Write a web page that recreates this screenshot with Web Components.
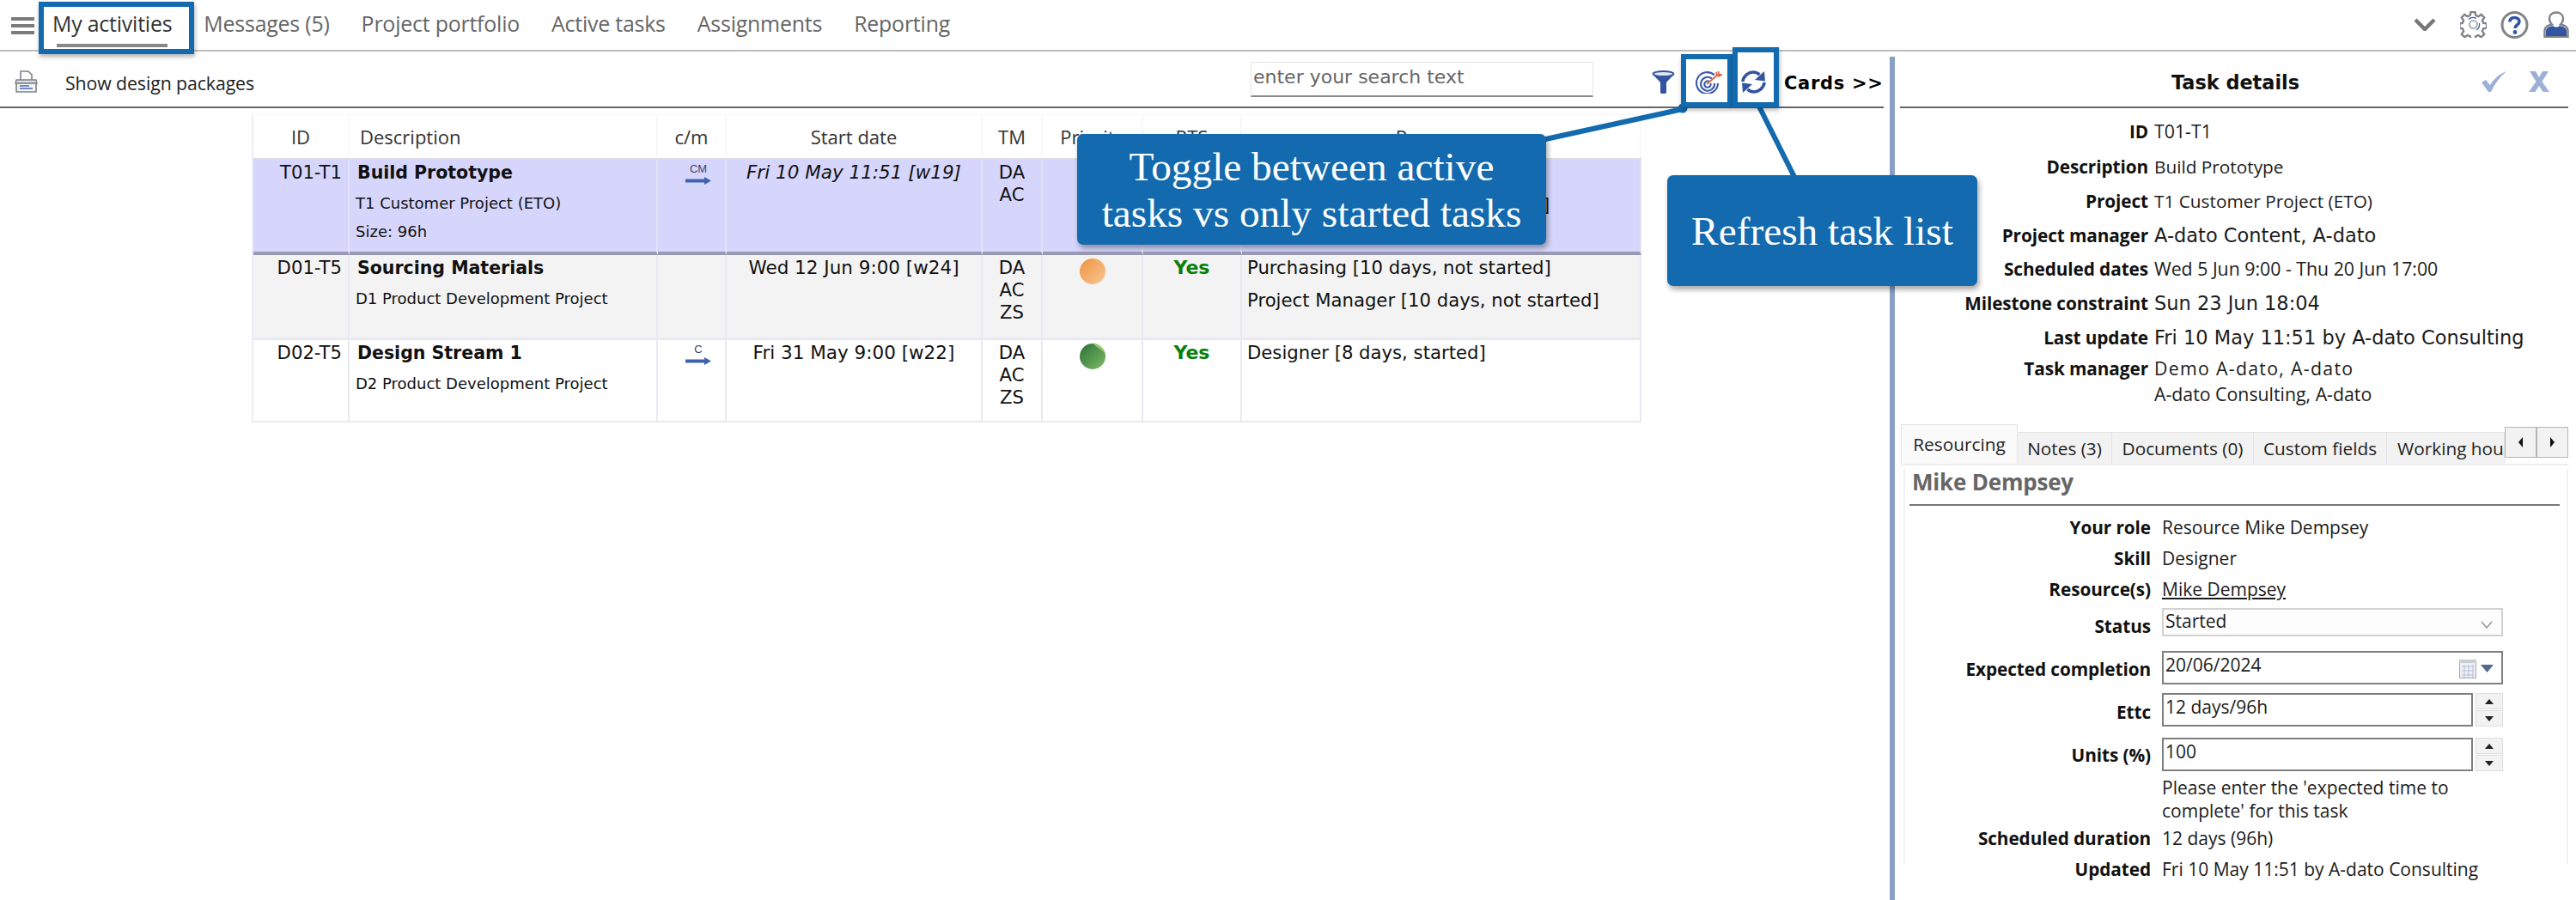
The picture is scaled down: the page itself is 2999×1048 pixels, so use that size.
<!DOCTYPE html>
<html>
<head>
<meta charset="utf-8">
<title>My activities</title>
<style>
html, body { margin: 0; padding: 0; background: #fff; }
body { width: 2999px; height: 1048px; overflow: hidden; position: relative; font-family: "Open Sans", "Liberation Sans", sans-serif; color: #111; }
</style>
</head>
<body>
<app-nav></app-nav>
<main-area></main-area>
<call-outs></call-outs>

<script>
const SANS = '"Open Sans", "Liberation Sans", sans-serif'
const VERD = '"DejaVu Sans", "Liberation Sans", sans-serif'

class AppNav extends HTMLElement {
	constructor() {
		super()
		this.attachShadow({ mode: 'open' })
	}
	connectedCallback() {
		this.shadowRoot.innerHTML = `
		<style>
			:host { display: flex; align-items: flex-start; height: 58px; border-bottom: 2px solid #bdbdbd; box-sizing: content-box; font-family: ${SANS}; }
			.burger { width: 27px; margin: 20px 21px 0 13px; display: flex; flex-direction: column; gap: 4px; }
			.burger i { display: block; height: 4px; background: #7b7b7b; }
			a { font-size: 24.900px; line-height: 30px; margin: 12px 37px 0 0; color: #666; letter-spacing: -.2px; white-space: nowrap; }
			a.on { color: #333; position: relative; margin-right: 37px; }
			a.on::after { content: ''; position: absolute; left: 5px; right: 5px; top: 39px; height: 4px; background: #888; }
			.right { margin-left: auto; display: flex; align-items: flex-start; padding: 13px 8px 0 0; }
			svg { display: block; }
		</style>
		<div class="burger"><i></i><i></i><i></i></div>
		<a class="on">My activities</a>
		<a>Messages (5)</a>
		<a>Project portfolio</a>
		<a>Active tasks</a>
		<a>Assignments</a>
		<a>Reporting</a>
		<div class="right">
			<svg width="26" height="15" viewBox="0 0 26 15" style="margin:8px 28px 0 0"><path d="M2 2 13 13 24 2" fill="none" stroke="#777" stroke-width="4.5"/></svg>
			<svg width="31" height="31" viewBox="0 0 31 31" style="margin-right:16px">
				<path d="M13 1.5h5l.8 4 3 1.2 3.4-2.3 3.5 3.5-2.3 3.4 1.2 3 4 .8v5l-4 .8-1.2 3 2.3 3.4-3.5 3.5-3.4-2.3-3 1.2-.8 3.4h-5l-.8-3.4-3-1.2-3.4 2.3-3.5-3.5 2.3-3.4-1.2-3-3.5-.8v-5l3.5-.8 1.2-3-2.3-3.4 3.5-3.5 3.4 2.3 3-1.2z" transform="translate(-.5 -.5)" fill="#fff" stroke="#808488" stroke-width="2.4"/>
				<circle cx="15.5" cy="15.5" r="4.5" fill="none" stroke="#9a9ea2" stroke-width="1.6"/>
				<path d="M10 9.5A8 8 0 0 1 19 8.5M22.5 14A8 8 0 0 1 19 22" fill="none" stroke="#3a5ba6" stroke-width="1.2"/>
			</svg>
			<svg width="33" height="32" viewBox="0 0 33 32" style="margin-right:17px">
				<ellipse cx="16.5" cy="16" rx="14.5" ry="14.5" fill="#fff" stroke="#808488" stroke-width="3"/>
				<path d="M11 12.5C11 9 13.5 7.5 16.5 7.5S22 9.2 22 12c0 4-5 4-5 8" fill="none" stroke="#2f55a4" stroke-width="3.6"/>
				<circle cx="17" cy="24.5" r="2.4" fill="#2f55a4"/>
			</svg>
			<svg width="30" height="31" viewBox="0 0 30 31">
				<path d="M1.5 30V22C2 17.500 6 16.500 10 15.500 7.500 13 7 10 7 8.500 7 4 10.500 1.500 15 1.500S23 4 23 8.500C23 10 22.500 13 20 15.500 24 16.500 28 17.500 28.500 22V30Z" fill="#fff" stroke="#808488" stroke-width="2.4"/>
				<path d="M3 29V22.500C3.500 19 7.500 18 11 17 13 19 17 19 19 17 22.500 18 26.500 19 27 22.500V29Z" fill="#33549f"/>
			</svg>
		</div>`
	}
}

class ToolBar extends HTMLElement {
	constructor() {
		super()
		this.attachShadow({ mode: 'open' })
	}
	connectedCallback() {
		this.shadowRoot.innerHTML = `
		<style>
			:host { display: flex; align-items: flex-start; border-bottom: 2px solid #666; margin-right: 7px; box-sizing: border-box; height: 66px; font-family: ${SANS}; }
			svg { display: block; }
			.lead { width: 1456px; flex: none; display: flex; align-items: flex-start; }
			.show { font-size: 21.300px; line-height: 28px; margin: 23px 0 0 32px; color: #222; letter-spacing: -.1px; white-space: nowrap; }
			.search { width: 399px; height: 41px; flex: none; box-sizing: border-box; margin-top: 12px; border: 1px solid #e6e6e6; border-bottom: 2px solid #8a8a8a; padding: 4px 0 0 2px; font: 22px/26px ${VERD}; color: #666; white-space: nowrap; }
			.cards { font: bold 21px/28px ${VERD}; letter-spacing: .7px; color: #000; margin: 23px 0 0 21px; white-space: nowrap; }
		</style>
		<div class="lead">
			<svg width="27" height="26" viewBox="0 0 27 26" style="margin:22px 0 0 17px">
				<path d="M7 1h9l4 4v8H7z" fill="#fff" stroke="#7d8288" stroke-width="1.6"/>
				<path d="M2 11h23l1 4H1z" fill="#d9dce0" stroke="#7d8288" stroke-width="1.4"/>
				<path d="M2 15h23v10H2z" fill="#f3f4f6" stroke="#7d8288" stroke-width="1.6"/>
				<path d="M6 18h11M6 21h15" stroke="#4a66b0" stroke-width="1.6"/>
			</svg>
			<div class="show">Show design packages</div>
		</div>
		<div class="search">enter your search text</div>
		<svg width="27" height="27" viewBox="0 0 27 27" style="margin:22px 0 0 68px">
			<ellipse cx="13.500" cy="4" rx="12" ry="3" fill="#dfe6f3" stroke="#33549f" stroke-width="1.800"/>
			<path d="M1.500 5 10 14V25.500Q10 27 13.500 27T17 25.500V14L25.500 5Q13.500 10 1.500 5Z" fill="#33549f"/>
		</svg>
		<svg width="32" height="27" viewBox="0 0 32 27" style="margin:22px 0 0 23px">
			<g fill="none" stroke="#3a5aa8" stroke-width="2.100">
				<path d="M23 5.500A12.500 12.500 0 1 0 27 15"/>
				<path d="M20 9.500A8 8 0 1 0 23 15"/>
				<path d="M17 13A3.700 3.700 0 1 0 18.500 15"/>
			</g>
			<path d="M14 16 27 5" stroke="#d9694a" stroke-width="1.800"/>
			<path d="M25 2 26 6 30 7M27.500 1 28 5 32 5" fill="none" stroke="#d9694a" stroke-width="1.800"/>
		</svg>
		<svg width="29" height="27" viewBox="0 0 29 27" style="margin:22px 0 0 22px">
			<g fill="none" stroke="#33549f" stroke-width="3.600">
				<path d="M1.800 13C3 6 9 2 14 2c3 0 5.500 1 7.500 3"/>
				<path d="M27.200 14C26 21 20 25 15 25c-3 0-5.500-1-7.500-3"/>
			</g>
			<g fill="#33549f">
				<path d="M27 1 28 12.500 16 11Z"/>
				<path d="M2 26 1 14.500 13 16Z"/>
			</g>
		</svg>
		<div class="cards">Cards &gt;&gt;</div>`
	}
}

class TaskTable extends HTMLElement {
	constructor() {
		super()
		this.attachShadow({ mode: 'open' })
	}
	dot(c1, c2, c3) {
		return `<svg width="30" height="30" viewBox="0 0 30 30" style="display:block;margin:2px auto 0">
			<defs><linearGradient id="g${c1.slice(1)}" x1="0" y1="0" x2="1" y2="1"><stop offset="0" stop-color="${c1}"/><stop offset="1" stop-color="${c2}"/></linearGradient></defs>
			<circle cx="15" cy="15" r="15" fill="url(#g${c1.slice(1)})"/>
			<path d="M15 0A15 15 0 0 1 29.500 11L15 0Z" fill="${c3}"/>
		</svg>`
	}
	arrow(label) {
		return `<div class="cm"><span>${label}</span><svg width="30" height="9" viewBox="0 0 30 9"><path d="M0 2.500H22V0L30 4.500 22 9V6.500H0Z" fill="#3f62ae"/></svg></div>`
	}
	connectedCallback() {
		this.shadowRoot.innerHTML = `
		<style>
			:host { display: block; margin: 7px 0 0 293px; width: 1618px; font: 21.200px/26px ${VERD}; color: #111; }
			table { border-collapse: separate; border-spacing: 0; table-layout: fixed; width: 1618px; border-left: 2px solid #edeef5; }
			th { font: 400 22px/26px ${SANS}; color: #333; height: 50px; padding: 0; border-top: 1px solid #f6f6f9; border-right: 2px solid #f8f8fb; text-align: center; vertical-align: middle; }
			th.l { text-align: left; padding-left: 12px; }
			td { vertical-align: top; padding: 2px 8px 0; border-right: 2px solid #e9e9f3; border-bottom: 2px solid #e9e9f3; box-sizing: border-box; }
			tr.sel td { background: #d6d6fc; height: 113px; border-bottom: 4px solid #9999b5; border-top: 2px solid #dcdce8; border-right-color: #e2e2f4; }
			tr.odd td { background: #f3f3f3; height: 99px; border-bottom: 3px solid #e9e9f3; }
			tr.last td { height: 96px; }
			.id { text-align: right; padding-right: 7px; }
			.tt { font-weight: bold; font-size: 20.500px; margin-left: 1px; white-space: nowrap; }
			.sub { font-size: 18px; line-height: 24px; margin: 11px 0 0 -1px; white-space: nowrap; }
			.sub + .sub { margin-top: 9px; }
			.c { text-align: center; padding-left: 0; padding-right: 0; }
			.cm { display: flex; flex-direction: column; align-items: center; margin: 2px 0 0 24px; width: 30px; gap: 2px; }
			.cm span { font: 13px/14px "Liberation Sans", sans-serif; color: #3a4468; }
			.yes { color: #078007; font-weight: bold; font-size: 22px; }
			.res { padding-left: 6px; white-space: nowrap; }
			.res div + div { margin-top: 12px; }
			.sd { white-space: nowrap; font-size: 21.500px; }
		</style>
		<table>
			<colgroup><col style="width:112px"><col style="width:359px"><col style="width:80px"><col style="width:298px"><col style="width:70px"><col style="width:117px"><col style="width:115px"><col style="width:465px"></colgroup>
			<tr><th>ID</th><th class="l">Description</th><th>c/m</th><th>Start date</th><th>TM</th><th>Priority</th><th>RTS</th><th>Resources</th></tr>
			<tr class="sel">
				<td class="id">T01-T1</td>
				<td><div class="tt">Build Prototype</div><div class="sub">T1 Customer Project (ETO)</div><div class="sub">Size: 96h</div></td>
				<td>${this.arrow('CM')}</td>
				<td class="c sd"><i>Fri 10 May 11:51 [w19]</i></td>
				<td class="c">DA<br>AC</td>
				<td></td><td></td>
				<td class="res"><div style="height:26px"></div><div style="margin-left:344px">]</div></td>
			</tr>
			<tr class="odd">
				<td class="id">D01-T5</td>
				<td><div class="tt">Sourcing Materials</div><div class="sub">D1 Product Development Project</div></td>
				<td></td>
				<td class="c sd">Wed 12 Jun 9:00 [w24]</td>
				<td class="c">DA<br>AC<br>ZS</td>
				<td>${this.dot('#ee9440', '#f6c794', '#f7b06a')}</td>
				<td class="c yes">Yes</td>
				<td class="res"><div>Purchasing [10 days, not started]</div><div>Project Manager [10 days, not started]</div></td>
			</tr>
			<tr class="last">
				<td class="id">D02-T5</td>
				<td><div class="tt">Design Stream 1</div><div class="sub">D2 Product Development Project</div></td>
				<td>${this.arrow('C')}</td>
				<td class="c sd">Fri 31 May 9:00 [w22]</td>
				<td class="c">DA<br>AC<br>ZS</td>
				<td>${this.dot('#2a6f3a', '#7fbd62', '#9ccb6a')}</td>
				<td class="c yes">Yes</td>
				<td class="res"><div>Designer [8 days, started]</div></td>
			</tr>
		</table>`
	}
}

class DetailRow extends HTMLElement {
	constructor() {
		super()
		this.attachShadow({ mode: 'open' })
	}
	connectedCallback() {
		const w = this.getAttribute('label-width') || '289'
		const g = this.getAttribute('gap') || '7'
		const h = this.getAttribute('h') || '40'
		const top = this.getAttribute('label-top') || '0'
		const font = this.hasAttribute('wide') ? `22.500px ${VERD}` : `${this.getAttribute('size') || 21.3}px ${SANS}`
		this.shadowRoot.innerHTML = `
		<style>
			:host { display: grid; grid-template-columns: ${w}px 1fr; column-gap: ${g}px; height: ${h}px; align-items: start; line-height: 26px; }
			.k { text-align: right; font: bold 20.800px/26px ${SANS}; color: #111; white-space: nowrap; margin-top: ${top}px; letter-spacing: -.1px; }
			.v { font: ${font}; line-height: inherit; color: #1c1c1c; white-space: nowrap; }
		</style>
		<div class="k">${this.getAttribute('label')}</div>
		<div class="v"><slot></slot></div>`
	}
}

class FieldBox extends HTMLElement {
	constructor() {
		super()
		this.attachShadow({ mode: 'open' })
	}
	connectedCallback() {
		const kind = this.getAttribute('kind')
		let tail = ''
		if (kind == 'select') {
			tail = `<svg width="14" height="9" viewBox="0 0 14 9" style="margin:12px 10px 0 0"><path d="M1 1 7 8 13 1" fill="none" stroke="#888" stroke-width="1.200"/></svg>`
		}
		if (kind == 'date') {
			tail = `<svg width="40" height="22" viewBox="0 0 40 22" style="margin:6px 9px 0 0">
				<path d="M.5 .5H19.500V21.500H.5Z" fill="#eef0f5" stroke="#a6a8ac"/><path d="M0 0H20V4H0Z" fill="#c9ccd0"/>
				<path d="M3 8H17M3 13H17M3 18H17M6 6V21M11 6V21M16 6V21" stroke="#b3c0d8"/>
				<path d="M25 6H40L32.500 15Z" fill="#55688f"/>
			</svg>`
		}
		const spin = kind == 'spin'
		this.shadowRoot.innerHTML = `
		<style>
			:host { display: flex; gap: 3px; width: 397px; font: 21px/24px ${SANS}; color: #1c1c1c; }
			.box { flex: 1; display: flex; justify-content: space-between; box-sizing: border-box; border: ${kind == 'select' ? '2px solid #d2d2d2' : '2px solid #808080'}; height: ${kind == 'select' ? 33 : 39}px; padding: ${kind == 'select' ? 1 : 2}px 0 0 2px; background: ${kind == 'select' ? '#fdfdfd' : '#fff'}; }
			.spin { width: 32px; height: 39px; display: flex; flex-direction: column; gap: 1px; }
			.spin i { flex: 1; background: #f2f2f2; border: 1px solid #ddd; display: flex; align-items: center; justify-content: center; }
			.up { width: 0; height: 0; border: 5px solid transparent; border-top: 0; border-bottom: 6px solid #222; }
			.dn { width: 0; height: 0; border: 5px solid transparent; border-bottom: 0; border-top: 6px solid #222; }
		</style>
		<div class="box"><span><slot></slot></span>${tail}</div>
		${spin ? '<div class="spin"><i><b class="up"></b></i><i><b class="dn"></b></i></div>' : ''}`
	}
}

class DetailTabs extends HTMLElement {
	constructor() {
		super()
		this.attachShadow({ mode: 'open' })
	}
	connectedCallback() {
		this.shadowRoot.innerHTML = `
		<style>
			:host { display: flex; align-items: flex-end; height: 46px; margin: 0 0 0 1px; width: 777px; font: 20.800px/26px ${SANS}; color: #222; border-bottom: 2px solid #eee; box-sizing: content-box; }
			div { flex: none; box-sizing: border-box; height: 37px; padding: 5px 0 0; text-align: center; background: #f2f2f2; border: 1px solid #e4e4e4; border-left: 0; border-bottom: 0; white-space: nowrap; overflow: hidden; }
			.on { width: 136px; height: 46px; padding-top: 9px; background: #fafafa; border-left: 1px solid #e4e4e4; }
			.wh { width: 137px; padding-left: 12px; text-align: left; }
			.scr { display: flex; position: relative; top: -7px; margin: 0; padding: 0; border: 0; overflow: visible; height: 36px; width: 74px; background: none; }
			.scr b { width: 37px; height: 36px; box-sizing: border-box; background: #f2f2f2; border: 1px solid #b4b4b4; display: flex; align-items: center; justify-content: center; }
			.l { width: 0; height: 0; border: 6px solid transparent; border-left: 0; border-right: 5px solid #111; }
			.r { width: 0; height: 0; border: 6px solid transparent; border-right: 0; border-left: 5px solid #111; }
		</style>
		<div class="on">Resourcing</div>
		<div style="width:110px">Notes (3)</div>
		<div style="width:165px">Documents (0)</div>
		<div style="width:155px">Custom fields</div>
		<div class="wh">Working hou</div>
		<div class="scr"><b><span class="l"></span></b><b><span class="r"></span></b></div>`
	}
}

class DetailPanel extends HTMLElement {
	constructor() {
		super()
		this.attachShadow({ mode: 'open' })
	}
	connectedCallback() {
		this.shadowRoot.innerHTML = `
		<style>
			:host { display: block; flex: 1; padding-left: 6px; font-family: ${SANS}; }
			.head { height: 66px; box-sizing: border-box; border-bottom: 2px solid #666; margin-right: 9px; display: flex; align-items: flex-start; position: relative; }
			.head h2 { margin: 21px 0 0; width: 100%; font: bold 22.400px/30px ${VERD}; text-align: center; padding-left: 3px; box-sizing: border-box; color: #111; }
			.acts { position: absolute; right: 22px; top: 23px; display: flex; gap: 26px; }
			.info { padding: 14px 0 0; height: 368px; box-sizing: border-box; }
			.res { margin: 0 9px 0 4px; padding-right: 8px; border-left: 2px solid #f2f2f2; border-right: 2px solid #f2f2f2; height: 460px; }
			h3 { margin: 4px 0 0 5px; padding: 0 0 11px 3px; font: bold 26px/30px ${SANS}; color: #666; border-bottom: 2px solid #777; letter-spacing: -.2px; }
			.form { padding-top: 12px; }
			u { text-underline-offset: 2px; }
			.note { line-height: 27px; width: 380px; white-space: normal; padding-top: 0; }
		</style>
		<div class="head">
			<h2>Task details</h2>
			<div class="acts">
				<svg width="29" height="24" viewBox="0 0 29 24"><path d="M0 13 5 10 10 16C14 9 21 3 29 0 21 7 15 15 11 24H8Z" fill="#9db0d8"/></svg>
				<svg width="24" height="24" viewBox="0 0 24 24"><path d="M1 0H8L12 7 16 0H23L15.500 12 24 24H16.500L12 17 7.500 24H0L8.500 12Z" fill="#9db0d8"/></svg>
			</div>
		</div>
		<div class="info">
			<detail-row label="ID" h="41">T01-T1</detail-row>
			<detail-row label="Description" size="20.8" h="40">Build Prototype</detail-row>
			<detail-row label="Project" size="20.8" h="40">T1 Customer Project (ETO)</detail-row>
			<detail-row label="Project manager" wide h="39">A-dato Content, A-dato</detail-row>
			<detail-row label="Scheduled dates" h="40">Wed 5 Jun 9:00 - Thu 20 Jun 17:00</detail-row>
			<detail-row label="Milestone constraint" wide h="40">Sun 23 Jun 18:04</detail-row>
			<detail-row label="Last update" wide h="34">Fri 10 May 11:51 by A-dato Consulting</detail-row>
			<detail-row label="Task manager" h="60" label-top="2"><div style="line-height:30px"><span style="letter-spacing:1.300px">Demo A-dato, A-dato</span><br>A-dato Consulting, A-dato</div></detail-row>
		</div>
		<detail-tabs></detail-tabs>
		<div class="res">
			<h3>Mike Dempsey</h3>
			<div class="form">
				<detail-row label="Your role" label-width="286" gap="13" size="21" h="36">Resource Mike Dempsey</detail-row>
				<detail-row label="Skill" label-width="286" gap="13" size="21" h="36">Designer</detail-row>
				<detail-row label="Resource(s)" label-width="286" gap="13" size="21" h="35"><u>Mike Dempsey</u></detail-row>
				<detail-row label="Status" label-width="286" gap="13" size="21" h="50" label-top="8"><field-box kind="select">Started</field-box></detail-row>
				<detail-row label="Expected completion" label-width="286" gap="13" size="21" h="49" label-top="8"><field-box kind="date">20/06/2024</field-box></detail-row>
				<detail-row label="Ettc" label-width="286" gap="13" size="21" h="52" label-top="9"><field-box kind="spin">12 days/96h</field-box></detail-row>
				<detail-row label="Units (%)" label-width="286" gap="13" size="21" h="45" label-top="7"><field-box kind="spin">100</field-box></detail-row>
				<detail-row label="" label-width="286" gap="13" size="21" h="59"><div class="note">Please enter the 'expected time to complete' for this task</div></detail-row>
				<detail-row label="Scheduled duration" label-width="286" gap="13" size="21" h="36">12 days (96h)</detail-row>
				<detail-row label="Updated" label-width="286" gap="13" size="21" h="30">Fri 10 May 11:51 by A-dato Consulting</detail-row>
			</div>
		</div>`
	}
}

class MainArea extends HTMLElement {
	constructor() {
		super()
		this.attachShadow({ mode: 'open' })
	}
	connectedCallback() {
		this.shadowRoot.innerHTML = `
		<style>
			:host { display: flex; height: 988px; }
			.left { width: 2200px; flex: none; }
			.split { width: 6px; flex: none; margin-top: 6px; background: #87a0c3; }
		</style>
		<div class="left"><tool-bar></tool-bar><task-table></task-table></div>
		<div class="split"></div>
		<detail-panel></detail-panel>`
	}
}

// blue annotation layer that sits on top of the screenshot
class CallOuts extends HTMLElement {
	constructor() {
		super()
		this.attachShadow({ mode: 'open' })
	}
	connectedCallback() {
		this.shadowRoot.innerHTML = `
		<style>
			:host { position: absolute; left: 0; top: 0; width: 2999px; height: 1048px; pointer-events: none; font-family: "Liberation Serif", serif; }
			.frame { position: absolute; box-sizing: border-box; border: 6px solid #146aae; box-shadow: 1px 3px 5px rgba(0,0,0,.3); }
			.note { position: absolute; background: #146aae; color: #fff; border-radius: 7px; box-shadow: 2px 4px 6px rgba(0,0,0,.35); display: flex; align-items: center; justify-content: center; text-align: center; font-size: 47.300px; line-height: 54px; }
			svg { position: absolute; left: 0; top: 0; }
		</style>
		<svg width="2999" height="1048" viewBox="0 0 2999 1048">
			<path d="M1795 163 1959 127" stroke="#146aae" stroke-width="6"/>
			<circle cx="1959" cy="126" r="5.500" fill="#146aae"/>
			<path d="M2048 124 2089 206" stroke="#146aae" stroke-width="6"/>
		</svg>
		<div class="frame" style="left:45px;top:2px;width:181px;height:61px"></div>
		<div class="frame" style="left:1957px;top:63px;width:60px;height:62px"></div>
		<div class="frame" style="left:2017px;top:55px;width:54px;height:70px"></div>
		<div class="note" style="left:1254px;top:156px;width:546px;height:129px">Toggle between active<br>tasks vs only started tasks</div>
		<div class="note" style="left:1941px;top:204px;width:361px;height:129px">Refresh task list</div>`
	}
}

customElements.define('app-nav', AppNav)
customElements.define('tool-bar', ToolBar)
customElements.define('task-table', TaskTable)
customElements.define('detail-row', DetailRow)
customElements.define('field-box', FieldBox)
customElements.define('detail-tabs', DetailTabs)
customElements.define('detail-panel', DetailPanel)
customElements.define('main-area', MainArea)
customElements.define('call-outs', CallOuts)
</script>
</body>
</html>
